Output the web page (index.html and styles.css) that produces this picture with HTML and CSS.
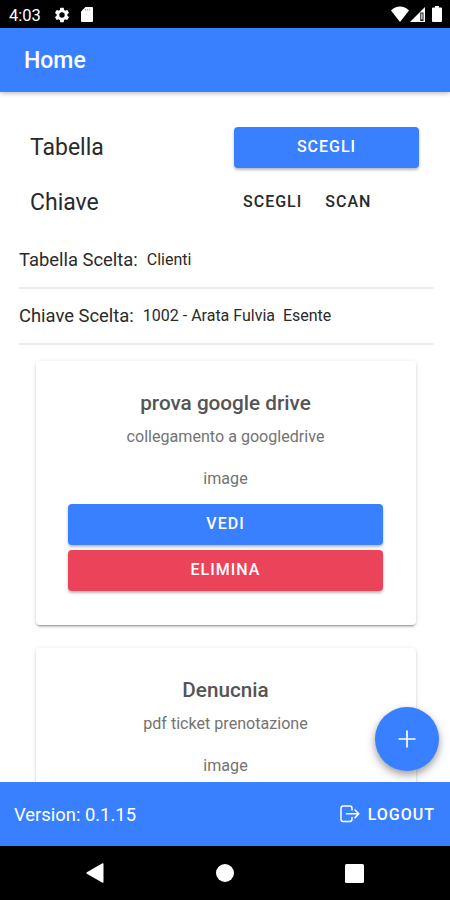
FILE: index.html
```html
<!DOCTYPE html>
<html lang="it">
<head>
    <meta charset="UTF-8">
    <meta name="viewport" content="width=device-width, initial-scale=1.0">
    <title>Home</title>
    <link rel="stylesheet" href="styles.css">
</head>
<body>
    <div class="status-bar">
        <span class="clock">4:03</span>
        <svg class="icon-gear" width="18" height="18" viewBox="0 0 24 24" fill="#fff"><path d="M19.14 12.94c.04-.3.06-.61.06-.94s-.02-.64-.07-.94l2.03-1.58a.5.5 0 0 0 .12-.61l-1.92-3.32a.5.5 0 0 0-.59-.22l-2.39.96a7 7 0 0 0-1.62-.94l-.36-2.54a.5.5 0 0 0-.48-.41h-3.84a.5.5 0 0 0-.47.41l-.36 2.54c-.59.24-1.13.57-1.62.94l-2.39-.96a.5.5 0 0 0-.59.22L2.74 8.87a.5.5 0 0 0 .12.61l2.03 1.58a6 6 0 0 0-.02 1.88l-2.03 1.58a.5.5 0 0 0-.12.61l1.92 3.32c.12.22.37.29.59.22l2.39-.96c.5.38 1.03.7 1.62.94l.36 2.54c.05.24.24.41.48.41h3.84c.24 0 .44-.17.47-.41l.36-2.54a7 7 0 0 0 1.62-.94l2.39.96c.22.08.47 0 .59-.22l1.92-3.32a.5.5 0 0 0-.12-.61zM12 15.6a3.6 3.6 0 1 1 0-7.2 3.6 3.6 0 0 1 0 7.2z"/></svg>
        <svg class="icon-sd" width="12" height="15" viewBox="0 0 12 15"><path fill="#fff" d="M4.5 0H11a1 1 0 0 1 1 1v13a1 1 0 0 1-1 1H1a1 1 0 0 1-1-1V4.5z"/><path stroke="#aaa" d="M4.5 2v1.500M6.500 2v1.500M8.500 2v1.500"/></svg>
        <div class="status-right">
            <svg width="18" height="16" viewBox="0 0 18 16"><path fill="#fff" d="M9 16 0 4.500C5-.7 13-.7 18 4.500z"/></svg>
            <svg class="icon-signal" width="15" height="15" viewBox="0 0 15 15"><path fill="#fff" d="M15 0v15H0z"/><path fill="#111" d="M10.300 5.500h3.200V14h-3.200z"/><path fill="#fff" d="M11.300 6.500h1.200v6h-1.200z"/></svg>
            <svg class="icon-battery" width="10" height="16" viewBox="0 0 10 16"><path fill="#fff" d="M3 0h4v1.500h2a1 1 0 0 1 1 1V15a1 1 0 0 1-1 1H1a1 1 0 0 1-1-1V2.500a1 1 0 0 1 1-1h2z"/></svg>
        </div>
    </div>

    <header>
        <h1>Home</h1>
    </header>

    <main>
        <div class="row">
            <span class="row-label">Tabella</span>
            <div class="row-actions">
                <a href="#" class="btn">Scegli</a>
            </div>
        </div>
        <div class="row">
            <span class="row-label">Chiave</span>
            <div class="row-actions">
                <a href="#" class="btn-clear">Scegli</a>
                <a href="#" class="btn-clear">Scan</a>
            </div>
        </div>

        <div class="list">
            <div class="item"><span class="item-label">Tabella Scelta:</span><span class="item-value">Clienti</span></div>
            <div class="item"><span class="item-label">Chiave Scelta:</span><span class="item-value">1002 - Arata Fulvia&nbsp; Esente</span></div>
        </div>

        <div class="card">
            <h2>prova google drive</h2>
            <p>collegamento a googledrive</p>
            <p class="type">image</p>
            <a href="#" class="btn">Vedi</a>
            <a href="#" class="btn btn-danger">Elimina</a>
        </div>
        <div class="card">
            <h2>Denucnia</h2>
            <p>pdf ticket prenotazione</p>
            <p class="type">image</p>
        </div>

        <a href="#" class="fab">
            <svg width="18" height="18" viewBox="0 0 18 18" stroke="#fff" stroke-width="1.700"><path d="M9 .5v17M.5 9h17"/></svg>
        </a>
    </main>

    <footer>
        <span class="version">Version: 0.1.15</span>
        <a href="#" class="logout">
            <svg width="20" height="18" viewBox="0 0 20 18" fill="none" stroke="#fff" stroke-width="1.500" stroke-linecap="round" stroke-linejoin="round"><path d="M12 5V3.200A2.200 2.200 0 0 0 9.800 1H3.200A2.200 2.200 0 0 0 1 3.200v11.100a2.200 2.200 0 0 0 2.200 2.200h6.600a2.200 2.200 0 0 0 2.200-2.200V12.500M15 5l3.800 3.800L15 12.600M6.500 8.800h12"/></svg>
            Logout
        </a>
    </footer>

    <div class="nav-bar">
        <svg width="18" height="20" viewBox="0 0 18 20"><path fill="#fff" d="M16.500.3Q17.500 0 17.500 1v18q0 1-1 .7L.8 10.700q-.8-.7 0-1.400z"/></svg>
        <svg width="18" height="18" viewBox="0 0 18 18"><circle cx="9" cy="9" r="9" fill="#fff"/></svg>
        <svg width="19" height="19" viewBox="0 0 19 19"><rect width="19" height="19" rx="1.500" fill="#fff"/></svg>
    </div>
</body>
</html>
```

FILE: styles.css
```css
* {
    box-sizing: border-box;
}
body {
    font-family: Roboto, sans-serif;
    color: #2a2a2a;
    margin: 0;
    height: 900px;
    display: flex;
    flex-direction: column;
    overflow: hidden;
    background-color: #fff;
}
a {
    text-decoration: none;
}
svg {
    display: block;
    flex: none;
}
.status-bar {
    height: 28px;
    flex: none;
    display: flex;
    align-items: center;
    padding: 2px 8px 0 9px;
    background-color: #000;
    color: #fff;
}
.clock {
    width: 44px;
    font-size: 16.5px;
}
.icon-gear {
    margin-top: -1px;
}
.icon-sd {
    margin: -1px 0 0 10px;
}
.status-right {
    display: flex;
    align-items: center;
    margin: -2px 0 0 auto;
}
.icon-signal {
    margin-left: 1px;
}
.icon-battery {
    margin-left: 7px;
}
header {
    height: 64px;
    flex: none;
    display: flex;
    align-items: center;
    padding: 0 24px;
    background-color: #3880ff;
    color: #fff;
    box-shadow: 0 1px 5px rgba(0,0,0,0.3);
    z-index: 1;
}
h1 {
    font-size: 23px;
    font-weight: 500;
    margin: 0;
}
main {
    flex: 1;
    min-height: 0;
    overflow: hidden;
    position: relative;
    padding-top: 28px;
}
.row {
    height: 55px;
    display: flex;
    align-items: center;
    padding: 0 31px 0 30px;
}
.row-label {
    width: 204px;
    font-size: 23px;
}
.row-actions {
    width: 185px;
    display: flex;
}
.btn {
    flex: 1;
    display: block;
    height: 41px;
    line-height: 40px;
    border-radius: 4px;
    background-color: #3880ff;
    color: #fff;
    font-size: 16px;
    font-weight: 500;
    letter-spacing: 1px;
    text-align: center;
    text-transform: uppercase;
    box-shadow: 0 2px 3px rgba(0,0,0,0.28);
}
.btn-danger {
    background-color: #eb445a;
}
.btn-clear {
    padding: 0 14px 2px 9px;
    color: #2a2a2a;
    font-size: 16px;
    font-weight: 500;
    letter-spacing: 1px;
    text-transform: uppercase;
}
.list {
    padding: 3px 17px 0 19px;
}
.item {
    height: 56px;
    display: flex;
    align-items: center;
    padding-bottom: 1px;
    border-bottom: 2px solid #ebebeb;
}
.item-label {
    margin-right: 9px;
    font-size: 18.4px;
}
.item-value {
    font-size: 16px;
}
.card {
    height: 264px;
    margin: 16px 34px 23px 36px;
    padding: 29px 33px 0 32px;
    border-radius: 4px;
    box-shadow: 0 3px 1px -2px rgba(0,0,0,0.2), 0 2px 2px rgba(0,0,0,0.14), 0 1px 5px rgba(0,0,0,0.12);
    color: #737373;
    text-align: center;
}
.card h2 {
    margin: 0 0 9px;
    color: #555;
    font-size: 20.7px;
    font-weight: 500;
    line-height: 26px;
}
.card p {
    margin: 0;
    font-size: 16.1px;
    line-height: 24px;
}
.card .type {
    margin: 18px 0 13px;
}
.card .btn-danger {
    margin-top: 5px;
}
.fab {
    position: absolute;
    right: 11px;
    bottom: 11px;
    width: 64px;
    height: 64px;
    display: flex;
    align-items: center;
    justify-content: center;
    border-radius: 50%;
    background-color: #3880ff;
    box-shadow: 0 3px 6px rgba(0,0,0,0.25), 0 5px 12px rgba(0,0,0,0.18);
}
footer {
    height: 64px;
    flex: none;
    display: flex;
    align-items: center;
    justify-content: space-between;
    padding: 0 15px 0 14px;
    background-color: #3880ff;
    color: #fff;
}
.version {
    font-size: 18.4px;
}
.logout {
    display: flex;
    align-items: center;
    gap: 8px;
    color: #fff;
    font-size: 16px;
    font-weight: 500;
    letter-spacing: 1px;
    text-transform: uppercase;
}
.nav-bar {
    height: 54px;
    flex: none;
    display: flex;
    align-items: center;
    justify-content: space-between;
    padding: 0 86px;
    background-color: #000;
}
```
